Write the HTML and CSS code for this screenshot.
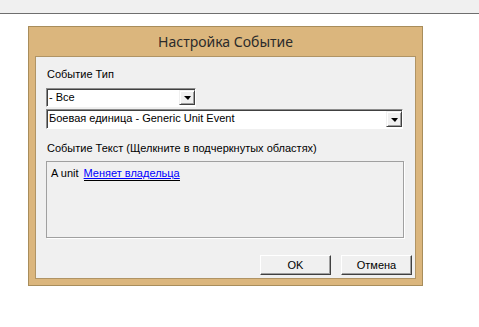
FILE: index.html
```html
<!DOCTYPE html>
<html lang="ru">
<head>
    <meta charset="UTF-8">
    <title>Настройка Событие</title>
    <link rel="stylesheet" href="styles.css">
</head>
<body>
    <div class="topbar"></div>
    <div class="window">
        <div class="title">Настройка Событие</div>
        <div class="client">
            <div class="label">Событие Тип</div>
            <div class="combo combo-short">
                <span class="combo-text">- Все</span>
                <span class="combo-btn"><span class="arrow"></span></span>
            </div>
            <div class="combo combo-long">
                <span class="combo-text">Боевая единица - Generic Unit Event</span>
                <span class="combo-btn"><span class="arrow"></span></span>
            </div>
            <div class="label label-text">Событие Текст (Щелкните в подчеркнутых областях)</div>
            <div class="textbox">
                A unit <a href="#" class="link">Меняет владельца</a>
            </div>
            <div class="buttons">
                <button type="button">OK</button>
                <button type="button">Отмена</button>
            </div>
        </div>
    </div>
</body>
</html>
```

FILE: styles.css
```css
*{
    margin: 0;
    padding: 0;
    box-sizing: border-box;
}
body{
    background-color: #ffffff;
    font-family: "Liberation Sans", Arial, sans-serif;
    font-size: 11px;
    color: #000;
}
.topbar{
    height: 14px;
    background-color: #f0f0f0;
    border-bottom: 1px solid #6e6e6e;
}
.window{
    width: 395px;
    height: 260px;
    margin: 12px 0 0 28px;
    background-color: #dbb67d;
    border: 1px solid #a88d5b;
    padding: 0 6px 6px 6px;
    display: flex;
    flex-direction: column;
}
.title{
    height: 29px;
    line-height: 29px;
    text-align: center;
    font-family: "Noto Sans", sans-serif;
    font-size: 14px;
    color: #2b2b2b;
}
.client{
    flex: 1;
    background-color: #f0f0f0;
    border: 1px solid #b09465;
    padding: 11px 0 0 10px;
    display: flex;
    flex-direction: column;
}
.label{
    line-height: 13px;
    height: 13px;
    margin-left: 1px;
}
.combo{
    display: flex;
    height: 19px;
    background-color: #fff;
    border: 1px solid;
    border-color: #8c8c8c #ffffff #ffffff #8c8c8c;
    box-shadow: inset 1px 1px 0 #404040;
    margin-top: 7px;
}
.combo-short{
    width: 150px;
}
.combo-long{
    width: 357px;
    height: 20px;
    margin-top: 2px;
}
.combo-text{
    flex: 1;
    padding-left: 2px;
    line-height: 16px;
    white-space: nowrap;
    overflow: hidden;
}
.combo-btn{
    width: 16px;
    margin: 1px 0 1px 0;
    background-color: #f0f0f0;
    border: 1px solid;
    border-color: #f0f0f0 #404040 #404040 #f0f0f0;
    box-shadow: inset 1px 1px 0 #ffffff, inset -1px -1px 0 #a0a0a0;
    display: flex;
    align-items: center;
    justify-content: center;
}
.arrow{
    width: 0;
    height: 0;
    border-left: 4px solid transparent;
    border-right: 3px solid transparent;
    border-top: 4px solid #000;
    margin-top: 1px;
}
.label-text{
    margin-top: 13px;
}
.textbox{
    width: 358px;
    height: 77px;
    margin-top: 6px;
    border: 1px solid #a0a0a0;
    box-shadow: 1px 1px 0 #ffffff;
    padding: 5px 0 0 4px;
    line-height: 13px;
}
.link{
    color: #0000ff;
    text-decoration: underline;
    border-bottom: 1px solid #000;
    padding-bottom: 1px;
    margin-left: 2px;
}
.buttons{
    display: flex;
    justify-content: flex-end;
    gap: 10px;
    margin-top: 17px;
    padding-right: 3px;
}
button{
    width: 71px;
    height: 20px;
    font-family: "Liberation Sans", Arial, sans-serif;
    font-size: 11px;
    color: #000;
    background-color: #f0f0f0;
    border: 1px solid;
    border-color: #ffffff #404040 #404040 #ffffff;
    box-shadow: inset -1px -1px 0 #a0a0a0;
}
```
